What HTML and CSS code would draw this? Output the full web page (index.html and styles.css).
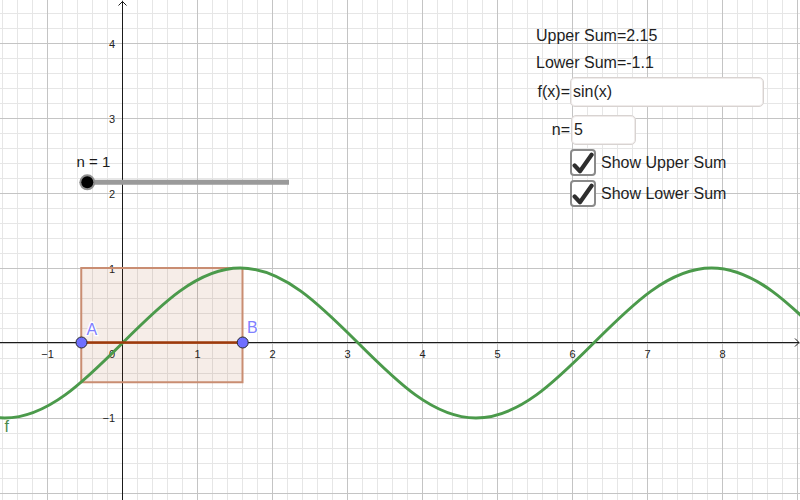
FILE: index.html
```html
<!DOCTYPE html>
<html>
<head>
<meta charset="utf-8">
<title>Riemann Sums</title>
<link rel="stylesheet" href="styles.css">
</head>
<body>
<div class="stage">
  <svg class="graph" width="800" height="500" viewBox="0 0 800 500">
    <defs>
      <pattern id="minor" patternUnits="userSpaceOnUse" x="0" y="0" width="15" height="15">
        <path d="M2.5 0V15M0 13.5H15" class="grid-minor"/>
      </pattern>
      <pattern id="major" patternUnits="userSpaceOnUse" x="0" y="0" width="75" height="75">
        <path d="M47.5 0V75M0 43.5H75" class="grid-major"/>
      </pattern>
    </defs>
    <rect width="800" height="500" fill="url(#minor)"/>
    <rect width="800" height="500" fill="url(#major)"/>

    <!-- axes -->
    <path class="axis" d="M0 342.5H799M122.5 500V1"/>
    <path class="axis" d="M118.5 5.5L122.5 1.5L126.5 5.5M795 338.5L799 342.5L795 346.5"/>

    <g class="ticks">
      <text x="47.5" y="357.5" text-anchor="middle">−1</text>
      <text x="115" y="357.5" text-anchor="end">0</text>
      <text x="197.5" y="357.5" text-anchor="middle">1</text>
      <text x="272.5" y="357.5" text-anchor="middle">2</text>
      <text x="347.5" y="357.5" text-anchor="middle">3</text>
      <text x="422.5" y="357.5" text-anchor="middle">4</text>
      <text x="497.5" y="357.5" text-anchor="middle">5</text>
      <text x="572.5" y="357.5" text-anchor="middle">6</text>
      <text x="647.5" y="357.5" text-anchor="middle">7</text>
      <text x="722.5" y="357.5" text-anchor="middle">8</text>
      <text x="115" y="47.7" text-anchor="end">4</text>
      <text x="115" y="122.7" text-anchor="end">3</text>
      <text x="115" y="197.7" text-anchor="end">2</text>
      <text x="115" y="272.7" text-anchor="end">1</text>
      <text x="115" y="422" text-anchor="end">−1</text>
    </g>

    <!-- sums and function in graph units -->
    <g transform="translate(122.5 343) scale(75 -75)">
      <rect class="sum" x="-0.55" y="0" width="2.15" height="1"/>
      <rect class="sum" x="-0.55" y="-0.5227" width="2.15" height="0.5227"/>
      <path class="curve" d="M-3.1416,0 C-2.6293,-0.5123 -2.1393,-1 -1.5708,-1 C-1.0023,-1 -0.5123,-0.5123 0,0 C0.5123,0.5123 1.0023,1 1.5708,1 C2.1393,1 2.6293,0.5123 3.1416,0 C3.6539,-0.5123 4.1439,-1 4.7124,-1 C5.2809,-1 5.7709,-0.5123 6.2832,0 C6.7955,0.5123 7.2855,1 7.8540,1 C8.4225,1 8.9125,0.5123 9.4248,0"/>
    </g>
    <path class="segment" d="M81.25 342.5H242.5"/>

    <circle class="pt" cx="81.5" cy="342.5" r="5.5"/>
    <circle class="pt" cx="242.7" cy="342.5" r="5.5"/>
    <text class="pt-label" x="86.5" y="334.5">A</text>
    <text class="pt-label" x="247" y="332.5">B</text>
    <text class="f-label" x="4.5" y="431.5">f</text>

    <!-- slider -->
    <text class="slider-label" x="76.5" y="166.7">n = 1</text>
    <path class="slider-line" d="M88 182.3H289"/>
    <circle cx="87.3" cy="182.3" r="8" class="knob-ring"/>
    <circle cx="87.3" cy="182.3" r="6" class="knob"/>
  </svg>

  <div class="panel">
    <div class="line">Upper Sum=2.15</div>
    <div class="line">Lower Sum=-1.1</div>
    <div class="field-row">
      <span class="field-label">f(x)=</span>
      <input class="field wide" type="text" value="sin(x)">
    </div>
    <div class="field-row gap">
      <span class="field-label">n=</span>
      <input class="field narrow" type="text" value="5">
    </div>
    <div class="check-row">
      <span class="checkbox"><svg width="22" height="23" viewBox="0 0 22 23"><path d="M2.6 14.5L8 20.2L19.6 3.8"/></svg></span>
      <span class="check-label">Show Upper Sum</span>
    </div>
    <div class="check-row">
      <span class="checkbox"><svg width="22" height="23" viewBox="0 0 22 23"><path d="M2.6 14.5L8 20.2L19.6 3.8"/></svg></span>
      <span class="check-label">Show Lower Sum</span>
    </div>
  </div>
</div>
</body>
</html>
```
FILE: styles.css
```css
html, body {
  margin: 0;
  padding: 0;
  background: #ffffff;
  overflow: hidden;
}
.stage {
  position: relative;
  width: 800px;
  height: 500px;
  overflow: hidden;
  font-family: "Liberation Sans", Arial, sans-serif;
}
.graph {
  display: block;
}
.grid-minor {
  stroke: #e6e6e6;
  stroke-width: 1;
  fill: none;
}
.grid-major {
  stroke: #c4c4c4;
  stroke-width: 1;
  fill: none;
}
.axis {
  stroke: #1a1a1a;
  stroke-width: 1;
  fill: none;
}
.ticks text {
  font-family: "Liberation Sans", Arial, sans-serif;
  font-size: 11px;
  fill: #222;
}
.sum {
  fill: rgba(153, 51, 0, 0.09);
  stroke: #c98d72;
  stroke-width: 2;
  vector-effect: non-scaling-stroke;
}
.curve {
  fill: none;
  stroke: #4b9a4b;
  stroke-width: 3;
  vector-effect: non-scaling-stroke;
}
.segment {
  stroke: #9c3a0c;
  stroke-width: 2.5;
  fill: none;
}
.pt {
  fill: #6f6fff;
  stroke: #2b2b2b;
  stroke-width: 1;
}
.pt-label {
  font-family: "Liberation Sans", Arial, sans-serif;
  font-size: 16px;
  fill: #8080ff;
  stroke: #ffffff;
  stroke-width: 2.5;
  paint-order: stroke;
}
.f-label {
  font-family: "Liberation Sans", Arial, sans-serif;
  font-size: 16px;
  fill: #4b8a4b;
}
.slider-label {
  font-family: "Liberation Sans", Arial, sans-serif;
  font-size: 15px;
  fill: #1a1a1a;
}
.slider-line {
  stroke: #9a9a9a;
  stroke-width: 5;
  fill: none;
}
.knob-ring {
  fill: #8f8f8f;
}
.knob {
  fill: #000000;
}

.panel {
  position: absolute;
  left: 536px;
  top: 22px;
  width: 250px;
  font-family: "Liberation Sans", Arial, sans-serif;
  font-size: 16px;
  color: #1e1e1e;
  display: flex;
  flex-direction: column;
}
.line {
  height: 27px;
  line-height: 27px;
  white-space: nowrap;
}
.field-row {
  display: flex;
  align-items: center;
  height: 30px;
  margin-top: 1px;
}
.field-row.gap {
  margin-top: 8px;
}
.field-label {
  width: 34px;
  text-align: right;
  line-height: 18px;
  white-space: nowrap;
}
.field {
  box-sizing: border-box;
  height: 30px;
  margin: 0;
  padding: 0 0 0 2px;
  border: 1px solid #d8d3d1;
  box-shadow: inset 0 0 0 1px #efebea;
  border-radius: 5px;
  background: #ffffff;
  font-family: "Liberation Sans", Arial, sans-serif;
  font-size: 16px;
  color: #1e1e1e;
  outline: none;
}
.field.wide {
  width: 194px;
}
.field.narrow {
  width: 65px;
  margin-left: 1px;
}
.check-row {
  display: flex;
  align-items: center;
  height: 27px;
  margin-top: 4px;
}
.checkbox {
  box-sizing: border-box;
  width: 26px;
  height: 27px;
  margin-left: 34px;
  border: 2px solid #8a8a8a;
  border-radius: 4px;
  background: #ffffff;
  display: flex;
}
.checkbox svg {
  display: block;
}
.checkbox path {
  fill: none;
  stroke: #2e2e2e;
  stroke-width: 4.2;
  stroke-linejoin: round;
  stroke-linecap: round;
}
.check-label {
  margin-left: 5px;
  line-height: 18px;
  white-space: nowrap;
}
```
